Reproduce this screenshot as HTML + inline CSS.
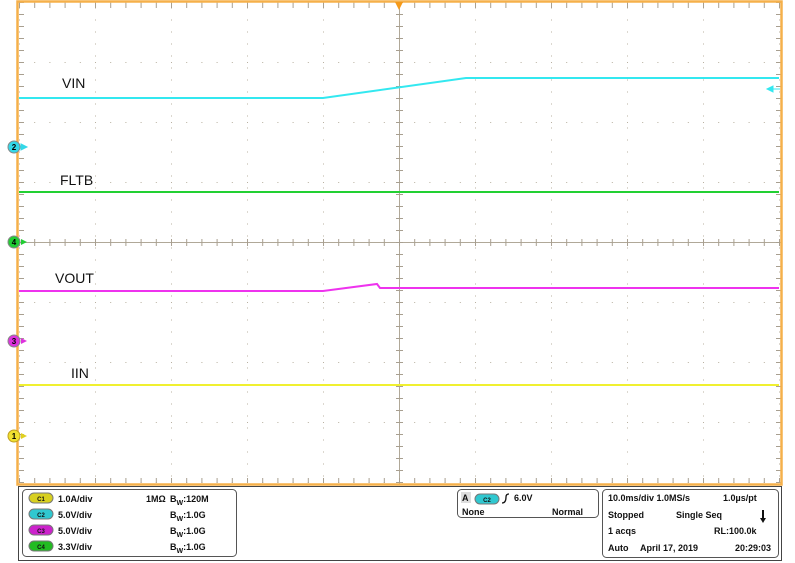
<!DOCTYPE html>
<html><head><style>
body{margin:0;background:#fff;width:795px;height:563px;overflow:hidden;font-family:"Liberation Sans",sans-serif}
</style></head><body>
<svg width="795" height="563" xmlns="http://www.w3.org/2000/svg" style="position:absolute;left:0;top:0">
<defs>
<pattern id="vdots" x="19" y="2" width="76" height="12" patternUnits="userSpaceOnUse"><rect x="0" y="5.5" width="1" height="1" fill="#b8b0a0"/></pattern>
<pattern id="hdots" x="19" y="2" width="15.2" height="60" patternUnits="userSpaceOnUse"><rect x="0" y="0" width="1" height="1" fill="#b8b0a0"/></pattern>
<pattern id="htick" x="19" y="0" width="15.2" height="10" patternUnits="userSpaceOnUse"><rect x="0" y="0" width="1" height="10" fill="#a89f90"/></pattern>
<pattern id="vtick" x="0" y="2" width="10" height="12" patternUnits="userSpaceOnUse"><rect x="0" y="0" width="10" height="1" fill="#a89f90"/></pattern>
</defs>
<rect x="19" y="2" width="763" height="482" fill="url(#vdots)"/>
<rect x="19" y="2" width="763" height="482" fill="url(#hdots)"/>
<!-- center axes -->
<line x1="19" y1="242.5" x2="782" y2="242.5" stroke="#b0a898" stroke-width="1"/>
<line x1="399.5" y1="2" x2="399.5" y2="484" stroke="#b0a898" stroke-width="1"/>
<rect x="19" y="239" width="763" height="7" fill="url(#htick)"/>
<rect x="396" y="2" width="7" height="482" fill="url(#vtick)"/>
<rect x="19" y="3" width="763" height="5" fill="url(#htick)"/>
<rect x="19" y="478" width="763" height="5" fill="url(#htick)"/>
<rect x="19" y="2" width="5" height="482" fill="url(#vtick)"/>
<rect x="776" y="2" width="5" height="482" fill="url(#vtick)"/>
<!-- border -->
<rect x="17.5" y="1.5" width="764" height="483" fill="none" stroke="#f5b04a" stroke-width="2.5"/>
<path d="M395 2 L403 2 L399 10 Z" fill="#f59a1a"/>
<!-- traces -->
<polyline points="19,98 323,98 466,78 779,78" fill="none" stroke="#33e8f0" stroke-width="2"/>
<line x1="19" y1="192" x2="779" y2="192" stroke="#22d033" stroke-width="2"/>
<polyline points="19,291 323,291 377,284 380,288 779,288" fill="none" stroke="#ee33ee" stroke-width="2"/>
<line x1="19" y1="385" x2="779" y2="385" stroke="#f0f030" stroke-width="2"/>
<path d="M767 89 L773 86 L773 92 Z M772 89 H780" stroke="#33e8f0" fill="#33e8f0"/>
<!-- labels -->
<g font-family="Liberation Sans, sans-serif" font-size="14" fill="#111">
<text x="62" y="88">VIN</text><text x="60" y="185">FLTB</text><text x="55" y="283">VOUT</text><text x="71" y="378">IIN</text>
</g>
<!-- markers -->
<g font-family="Liberation Sans, sans-serif" font-size="8" font-weight="bold" text-anchor="middle">
<circle cx="14" cy="147" r="6" fill="#33d8e8" stroke="#888"/><text x="14" y="150">2</text><path d="M21 144 L27 147 L21 150 Z M20 147 H26" fill="#33d8e8" stroke="#33d8e8"/>
<circle cx="14" cy="242" r="6" fill="#22cc33" stroke="#888"/><text x="14" y="245">4</text><path d="M21 239 L27 242 L21 245 Z" fill="#22cc33"/>
<circle cx="14" cy="341" r="6" fill="#dd33dd" stroke="#888"/><text x="14" y="344">3</text><path d="M21 338 L27 341 L21 344 Z" fill="#dd33dd"/>
<circle cx="14" cy="436" r="6" fill="#f0e030" stroke="#c0a020"/><text x="14" y="439">1</text><path d="M21 433 L27 436 L21 439 Z" fill="#e0d020"/>
</g>
<!-- bottom panel -->
<rect x="18.5" y="486.5" width="763" height="74" fill="#fff" stroke="#444"/>
<rect x="22.5" y="489.5" width="214" height="67" rx="4" fill="none" stroke="#555"/>
<rect x="457.5" y="489.5" width="141" height="28" rx="4" fill="none" stroke="#555"/>
<rect x="602.5" y="489.5" width="176" height="68" rx="4" fill="none" stroke="#555"/>
<g font-family="Liberation Sans, sans-serif" font-size="9" font-weight="bold" fill="#111">
<rect x="29" y="493" width="24" height="10" rx="5" fill="#d8d020" stroke="#777"/><text x="41" y="501" font-size="6" text-anchor="middle">C1</text>
<rect x="29" y="509" width="24" height="10" rx="5" fill="#30c8d0" stroke="#777"/><text x="41" y="517" font-size="6" text-anchor="middle">C2</text>
<rect x="29" y="525" width="24" height="10" rx="5" fill="#cc22cc" stroke="#777"/><text x="41" y="533" font-size="6" text-anchor="middle">C3</text>
<rect x="29" y="541" width="24" height="10" rx="5" fill="#22bb22" stroke="#777"/><text x="41" y="549" font-size="6" text-anchor="middle">C4</text>
<text x="58" y="502">1.0A/div</text><text x="58" y="518">5.0V/div</text><text x="58" y="534">5.0V/div</text><text x="58" y="550">3.3V/div</text>
<text x="146" y="502">1MΩ</text>
<text x="170" y="502">B<tspan font-size="7" dy="3">W</tspan><tspan dy="-3">:120M</tspan></text>
<text x="170" y="518">B<tspan font-size="7" dy="3">W</tspan><tspan dy="-3">:1.0G</tspan></text>
<text x="170" y="534">B<tspan font-size="7" dy="3">W</tspan><tspan dy="-3">:1.0G</tspan></text>
<text x="170" y="550">B<tspan font-size="7" dy="3">W</tspan><tspan dy="-3">:1.0G</tspan></text>
<rect x="461" y="492" width="10" height="11" fill="#ddd"/><text x="462" y="501">A</text>
<rect x="475" y="494" width="24" height="10" rx="5" fill="#30c8d0" stroke="#777"/><text x="487" y="502" font-size="6" text-anchor="middle">C2</text>
<path d="M502 503 Q506 503 506 497 Q506 494 509 494" fill="none" stroke="#111" stroke-width="1.3"/>
<text x="514" y="501">6.0V</text>
<text x="462" y="515">None</text><text x="552" y="515">Normal</text>
<text x="608" y="501">10.0ms/div 1.0MS/s</text><text x="723" y="501">1.0µs/pt</text>
<text x="608" y="518">Stopped</text><text x="676" y="518">Single Seq</text>
<path d="M763 510 V519" stroke="#111" stroke-width="2"/><path d="M760 518 L766 518 L763 523 Z" fill="#111"/>
<text x="608" y="534">1 acqs</text><text x="714" y="534">RL:100.0k</text>
<text x="608" y="551">Auto</text><text x="640" y="551">April 17, 2019</text><text x="735" y="551">20:29:03</text>
</g>
</svg>
</body></html>
